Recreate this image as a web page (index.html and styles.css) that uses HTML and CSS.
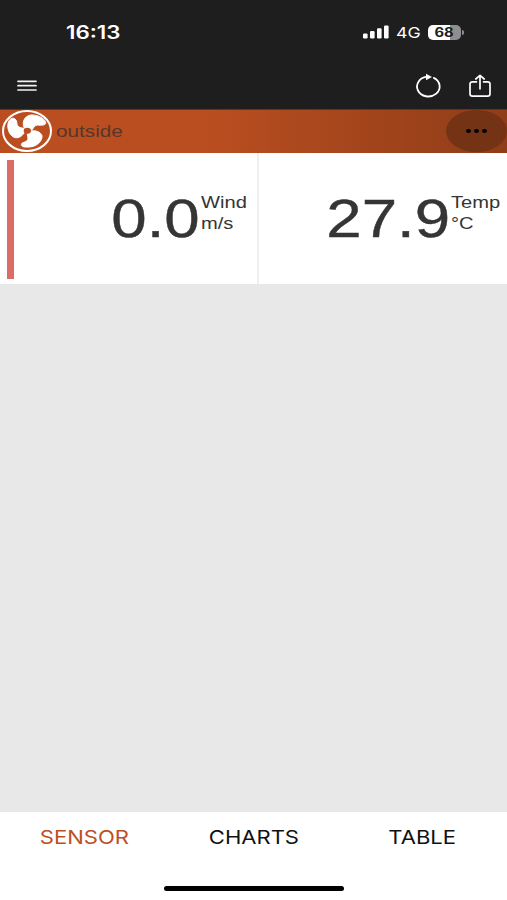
FILE: index.html
```html
<!DOCTYPE html>
<html lang="en">
<head>
  <meta charset="UTF-8" />
  <meta name="viewport" content="width=device-width, initial-scale=1.0" />
  <title>outside</title>
  <link rel="stylesheet" href="styles.css">
</head>
<body>
  <div class="app">
    <div class="status-bar">
      <div class="time"><span class="wide">16:13</span></div>
      <div class="status-icons">
        <svg class="signal" width="26" height="14" viewBox="0 0 26 14" fill="#fff">
          <rect x="0" y="8.5" width="4.6" height="5" rx="1.2" />
          <rect x="7" y="6" width="4.6" height="7.5" rx="1.2" />
          <rect x="14" y="3.2" width="4.6" height="10.3" rx="1.2" />
          <rect x="21" y="0.4" width="4.6" height="13.1" rx="1.2" />
        </svg>
        <div class="network"><span class="wide">4G</span></div>
        <div class="battery"><span class="wide">68</span></div>
        <div class="battery-tip"></div>
      </div>
    </div>

    <div class="toolbar">
      <svg class="menu" width="20" height="12" viewBox="0 0 20 12" stroke="#f2f2f2" stroke-width="1.7" stroke-linecap="round">
        <path d="M1 1.3H19M1 5.7H19M1 10H19" />
      </svg>
      <svg class="refresh" width="26" height="24" viewBox="0 0 26 24" fill="none" stroke="#fff" stroke-width="1.8">
        <path d="M18.8 3.9A11.3 9.9 0 1 1 12.5 2.700" stroke-linecap="round" />
        <path d="M11 -0.300L17 3L11 6.300Z" fill="#fff" stroke="none" />
      </svg>
      <svg class="share" width="22" height="24" viewBox="0 0 22 24" fill="none" stroke="#fff" stroke-width="1.7" stroke-linecap="round" stroke-linejoin="round">
        <path d="M7.5 7.8H3.5Q1 7.8 1 10V19.8Q1 22.2 3.5 22.2H18.5Q21 22.2 21 19.8V10Q21 7.8 18.5 7.8H14.5" />
        <path d="M11 14.8V1.3M6.8 5L11 1.3L15.2 5" />
      </svg>
    </div>

    <div class="device-header">
      <svg class="fan" width="52" height="44" viewBox="0 0 156 132">
        <ellipse cx="75" cy="66" rx="72" ry="60" fill="none" stroke="#fff" stroke-width="6" />
        <g fill="#fff" stroke="#fff" stroke-width="3" stroke-linejoin="round">
          <path d="M67 58C59 42 66 21 86 18C106 17 128 28 131 40C133 50 117 49 106 48C96 49 95 59 87 65Z" />
          <path d="M68 69C62 80 52 88 40 86C24 82 15 62 18 44C20 31 31 24 39 30C48 37 41 48 51 54C57 57 61 56 67 60Z" />
          <path d="M84 67C98 62 116 68 120 80C122 96 104 113 82 114C70 115 59 114 58 107C58 99 72 101 77 93C80 87 75 80 76 71Z" />
        </g>
        <ellipse cx="76" cy="65" rx="11" ry="9" fill="#ba4e20" />
      </svg>
      <div class="device-name"><span class="wide">outside</span></div>
      <div class="more"><i></i><i></i><i></i></div>
    </div>

    <div class="readings">
      <div class="reading alarm">
        <div class="value"><span class="wide">0.0</span></div>
        <div class="unit"><span class="wide">Wind<br>m/s</span></div>
      </div>
      <div class="reading">
        <div class="value"><span class="wide">27.9</span></div>
        <div class="unit"><span class="wide">Temp<br>°C</span></div>
      </div>
    </div>

    <div class="content"></div>

    <div class="tabs">
      <div class="tab active"><span class="wide">SENSOR</span></div>
      <div class="tab"><span class="wide">CHARTS</span></div>
      <div class="tab"><span class="wide">TABLE</span></div>
    </div>
    <div class="home-area"><div class="home-indicator"></div></div>
  </div>
</body>
</html>
```

FILE: styles.css
```css
* {
  box-sizing: border-box;
}
body {
  margin: 0;
  font-family: "Liberation Sans", Arial, sans-serif;
  background-color: #fff;
  color: #353535;
}
.app {
  display: flex;
  flex-direction: column;
  width: 507px;
  height: 900px;
  overflow: hidden;
}
/* extended lettering */
.wide {
  display: inline-block;
  white-space: nowrap;
  transform: scaleX(1.22);
  transform-origin: left center;
}
.status-bar {
  display: flex;
  justify-content: space-between;
  align-items: center;
  height: 64px;
  padding: 0 43px 0 66px;
  background-color: #1e1e1e;
  color: #fff;
  font-family: Inter, sans-serif;
}
.time {
  font-size: 18px;
  font-weight: 600;
}
.time .wide {
  transform: scaleX(1.24);
}
.status-icons {
  display: flex;
  align-items: center;
}
.network {
  width: 25px;
  font-size: 15px;
  margin-left: 7px;
}
.network .wide {
  transform: scaleX(1.18);
}
.battery {
  display: flex;
  justify-content: center;
  align-items: center;
  width: 33px;
  height: 15px;
  margin-left: 7px;
  border-radius: 5px;
  background: linear-gradient(to right, #fff 68%, #8e8e8e 68%);
  color: #1e1e1e;
  font-size: 12.5px;
  font-weight: 700;
}
.battery .wide {
  transform: scaleX(1.18);
  transform-origin: center;
}
.battery-tip {
  width: 2px;
  height: 5px;
  margin-left: 1px;
  border-radius: 0 2px 2px 0;
  background-color: #8e8e8e;
}
.toolbar {
  display: flex;
  align-items: center;
  height: 45px;
  padding: 0 16px 0 17px;
  background-color: #1e1e1e;
}
.menu,
.refresh,
.share {
  margin-bottom: 2px;
}
.refresh {
  margin-left: auto;
  overflow: visible;
}
.share {
  margin-left: 28px;
}
.device-header {
  display: flex;
  align-items: center;
  height: 44px;
  padding-left: 2px;
  background: linear-gradient(to right, #ba4e20 0%, #ba4e20 40%, #8f3d18 100%);
  box-shadow: inset 0 1px #6e3018;
}
.fan {
  flex: none;
}
.device-name {
  margin: 1px 0 0 2px;
  font-size: 17px;
  color: #57372b;
}
.more {
  display: flex;
  justify-content: center;
  align-items: center;
  gap: 3px;
  width: 61px;
  height: 42px;
  margin-left: auto;
  border-radius: 30px / 21px;
  background-color: #753315;
}
.more i {
  width: 5px;
  height: 4px;
  border-radius: 50%;
  background-color: #000;
}
.readings {
  display: flex;
  height: 132px;
  border-bottom: 1px solid #e8e8e8;
}
.reading {
  display: flex;
  justify-content: flex-end;
  width: 248px;
  padding-top: 35px;
}
.reading.alarm {
  width: 259px;
  border-right: 2px solid #efefef;
  background: linear-gradient(#dc6c68, #dc6c68) 7px 7px / 7px 119px no-repeat;
}
.value {
  padding: 1px 1px 0 0;
  font-size: 53px;
  line-height: 60px;
  -webkit-text-stroke: 0.4px;
}
.value .wide {
  transform: scaleX(1.2);
  transform-origin: right center;
}
.unit {
  width: 56px;
  padding-top: 4px;
  font-size: 16.5px;
  line-height: 21px;
}
.content {
  flex: 1;
  background-color: #e8e8e8;
}
.tabs {
  display: flex;
  height: 49px;
  padding-top: 1px;
  font-family: Inter, sans-serif;
  font-size: 19px;
  color: #111;
}
.tab {
  display: flex;
  flex: 1;
  justify-content: center;
  align-items: center;
}
.tab .wide {
  transform: scaleX(1.16);
  transform-origin: center;
}
.tab.active {
  color: #bd4f25;
}
.home-area {
  display: flex;
  justify-content: center;
  height: 39px;
  padding: 25px 0 0 1px;
}
.home-indicator {
  width: 180px;
  height: 5px;
  border-radius: 3px;
  background-color: #000;
}
```
